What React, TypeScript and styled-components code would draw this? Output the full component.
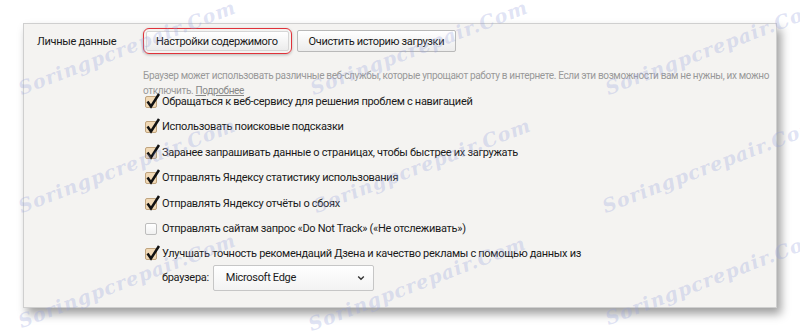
import styled, { createGlobalStyle } from "styled-components"

const GlobalStyle = createGlobalStyle`
    html, body {
        margin: 0;
        padding: 0;
        background: #ffffff;
    }
    body {
        font-family: Roboto, "Noto Sans", sans-serif;
        color: #1a1a1a;
    }
`

type TItem = {
    label: string
    checked: boolean
}

const items: TItem[] = [
    { label: "Обращаться к веб-сервису для решения проблем с навигацией", checked: true },
    { label: "Использовать поисковые подсказки", checked: true },
    { label: "Заранее запрашивать данные о страницах, чтобы быстрее их загружать", checked: true },
    { label: "Отправлять Яндексу статистику использования", checked: true },
    { label: "Отправлять Яндексу отчёты о сбоях", checked: true },
    { label: "Отправлять сайтам запрос «Do Not Track» («Не отслеживать»)", checked: false },
]

const marks = [
    [23, 97], [315, 97], [610, 97],
    [23, 215], [318, 215], [607, 215],
    [23, 330], [313, 333], [610, 327],
]

const CheckBox = ({ checked }: { checked: boolean }) => (
    <Box $checked={checked}>
        {checked && (
            <svg width="16" height="16" viewBox="0 0 16 16">
                <path d="M2.5 8.5 L6 13.5 L14 1" fill="none" stroke="#111" strokeWidth="2.5" />
            </svg>
        )}
    </Box>
)

const App = () => {
    return (
        <>
            <GlobalStyle />
            <Page>
                <Panel>
                    <SectionLabel>Личные данные</SectionLabel>
                    <Content>
                        <ButtonRow>
                            <Highlight>
                                <Button>Настройки содержимого</Button>
                            </Highlight>
                            <Button $wide>Очистить историю загрузки</Button>
                        </ButtonRow>
                        <Hint>
                            Браузер может использовать различные веб-службы, которые упрощают работу в интернете. Если эти возможности вам не нужны, их можно
                            <br />
                            отключить. <a href="#">Подробнее</a>
                        </Hint>
                        <List>
                            {items.map((item) => (
                                <Row key={item.label}>
                                    <CheckBox checked={item.checked} />
                                    <span>{item.label}</span>
                                </Row>
                            ))}
                            <Row>
                                <CheckBox checked />
                                <div>
                                    <span>Улучшать точность рекомендаций Дзена и качество рекламы с помощью данных из</span>
                                    <BrowserLine>
                                        <span>браузера:</span>
                                        <Select>
                                            <span>Microsoft Edge</span>
                                            <svg width="8" height="6" viewBox="0 0 8 6">
                                                <path d="M1.2 1.5 L4 4.3 L6.8 1.5" fill="none" stroke="#333" strokeWidth="1.4" />
                                            </svg>
                                        </Select>
                                    </BrowserLine>
                                </div>
                            </Row>
                        </List>
                    </Content>
                </Panel>
                <Watermarks>
                    {marks.map(([x, y]) => (
                        <Mark key={`${x}-${y}`} style={{ left: x, top: y - 20 }}>Soringpcrepair.Com</Mark>
                    ))}
                </Watermarks>
            </Page>
        </>
    )
}

export default App

const Page = styled.div`
    position: relative;
    width: 800px;
    height: 331px;
    padding: 23px 23px 0 23px;
    box-sizing: border-box;
    overflow: hidden;
`

const Panel = styled.div`
    width: 754px;
    height: 285px;
    box-sizing: border-box;
    border: 1px solid #cfcfcf;
    background-color: #f4f3f1;
    box-shadow: 4px 6px 9px rgba(0, 0, 0, 0.38);
    display: flex;
    padding: 4px 0 0 13px;
`

const SectionLabel = styled.div`
    width: 106px;
    flex-shrink: 0;
    font-size: 11px;
    letter-spacing: -0.3px;
    line-height: 18px;
    padding-top: 4.5px;
`

const Content = styled.div`
    flex: 1;
    display: flex;
    flex-direction: column;
`

const ButtonRow = styled.div`
    display: flex;
    align-items: center;
    gap: 5px;
`

const Highlight = styled.div`
    border: 1.5px solid #e0323a;
    border-radius: 6px;
    padding: 2px;
    box-shadow: 0 1px 3px rgba(0, 0, 0, 0.25);
    display: flex;
`

const Button = styled.div<{ $wide?: boolean }>`
    height: ${(p) => (p.$wide ? "22px" : "20px")};
    box-sizing: border-box;
    padding: 0 ${(p) => (p.$wide ? "11px" : "10px")} 0 ${(p) => (p.$wide ? "11px" : "9px")};
    display: flex;
    align-items: center;
    font-size: 11px;
    letter-spacing: -0.35px;
    background: linear-gradient(#ffffff, #ececec);
    border: 1px solid ${(p) => (p.$wide ? "#b9b9b9" : "#d6d6d6")};
    border-radius: 2px;
`

const Hint = styled.div`
    margin-top: 13.5px;
    font-size: 10px;
    letter-spacing: -0.35px;
    line-height: 15px;
    color: #999;
    white-space: nowrap;

    a {
        color: #888;
        text-decoration: underline;
    }
`

const List = styled.div`
    margin-top: -4.5px;
    display: flex;
    flex-direction: column;
    gap: 7.4px;
`

const Row = styled.div`
    display: flex;
    align-items: flex-start;
    gap: 5px;
    padding-left: 2px;
    font-size: 11px;
    letter-spacing: -0.3px;
    line-height: 18px;
`

const Box = styled.div<{ $checked: boolean }>`
    position: relative;
    width: 12px;
    height: 12px;
    margin-top: 3px;
    flex-shrink: 0;
    box-sizing: border-box;
    border: 1px solid ${(p) => (p.$checked ? "#c0a47e" : "#bdbdbd")};
    border-radius: 2px;
    background: ${(p) => (p.$checked ? "#f1d9b6" : "linear-gradient(#ffffff, #f0f0f0)")};

    svg {
        position: absolute;
        left: -1px;
        top: -4px;
    }
`

const BrowserLine = styled.div`
    display: flex;
    align-items: center;
    gap: 4px;
    margin-top: 2px;
`

const Select = styled.div`
    width: 161px;
    height: 26px;
    box-sizing: border-box;
    display: flex;
    align-items: center;
    justify-content: space-between;
    padding: 0 8px 0 12px;
    background: linear-gradient(#ffffff, #f3f3f3);
    border: 1px solid #c6c6c6;
    border-radius: 2px;
    font-size: 11px;
    letter-spacing: -0.3px;
`

const Watermarks = styled.div`
    position: absolute;
    inset: 0;
    pointer-events: none;
`

const Mark = styled.span`
    position: absolute;
    font-family: "DejaVu Serif", serif;
    font-style: italic;
    font-weight: bold;
    font-size: 19px;
    line-height: 22px;
    letter-spacing: 1px;
    white-space: nowrap;
    color: rgba(150, 162, 220, 0.3);
    transform-origin: left bottom;
    transform: rotate(-21deg);
`
